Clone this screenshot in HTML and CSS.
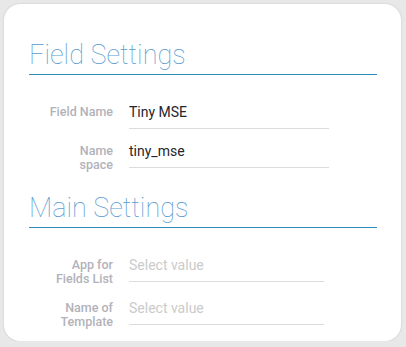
FILE: index.html
```html
<!DOCTYPE html>
<html lang="en">
<head>
    <meta charset="UTF-8">
    <meta name="viewport" content="width=device-width, initial-scale=1.0">
    <title>Field Settings</title>
    <link rel="stylesheet" href="styles.css">
</head>
<body>
    <div class="card">
        <!-- Field settings -->
        <div class="section">
            <div class="section-title">Field Settings</div>
            <div class="rows">
                <div class="row">
                    <div class="label">Field Name</div>
                    <div class="field">Tiny MSE</div>
                </div>
                <div class="row">
                    <div class="label">Name<br>space</div>
                    <div class="field">tiny_mse</div>
                </div>
            </div>
        </div>

        <!-- Main settings -->
        <div class="section section-main">
            <div class="section-title">Main Settings</div>
            <div class="rows">
                <div class="row">
                    <div class="label">App for<br>Fields List</div>
                    <div class="field field-short placeholder">Select value</div>
                </div>
                <div class="row">
                    <div class="label">Name of<br>Template</div>
                    <div class="field field-short placeholder">Select value</div>
                </div>
            </div>
        </div>
    </div>
</body>
</html>
```

FILE: styles.css
```css
* {
    margin: 0;
    padding: 0;
    box-sizing: border-box;
    font-family: Roboto, "Liberation Sans", Arial, sans-serif;
}

body {
    background: #e8e8e8;
    padding: 4px 5px 0 4px;
}

.card {
    background: white;
    border-radius: 16px;
    box-shadow: 0 0 2px rgba(0, 0, 0, 0.18);
    height: 337px;
    padding: 36px 24px 0 25px;
}

.section-title {
    font-size: 27px;
    font-weight: 100;
    line-height: 30px;
    color: #5a9bd0;
    padding-bottom: 4px;
    border-bottom: 1px solid #2e8cbb;
}

.section-main {
    margin-top: 21px;
}

.rows {
    display: flex;
    flex-direction: column;
    gap: 12px;
    margin-top: 27px;
}

.row {
    display: flex;
    align-items: flex-start;
    gap: 16px;
}

.label {
    width: 84px;
    padding-top: 3px;
    text-align: right;
    font-size: 12.5px;
    font-weight: 500;
    line-height: 14px;
    color: #b2b2ba;
}

.field {
    width: 200px;
    font-size: 14px;
    line-height: 20px;
    color: #26252d;
    padding-bottom: 6px;
    border-bottom: 1px solid #dcdcdc;
}

.field-short {
    width: 195px;
}

.placeholder {
    color: #cbcbcb;
}
```
